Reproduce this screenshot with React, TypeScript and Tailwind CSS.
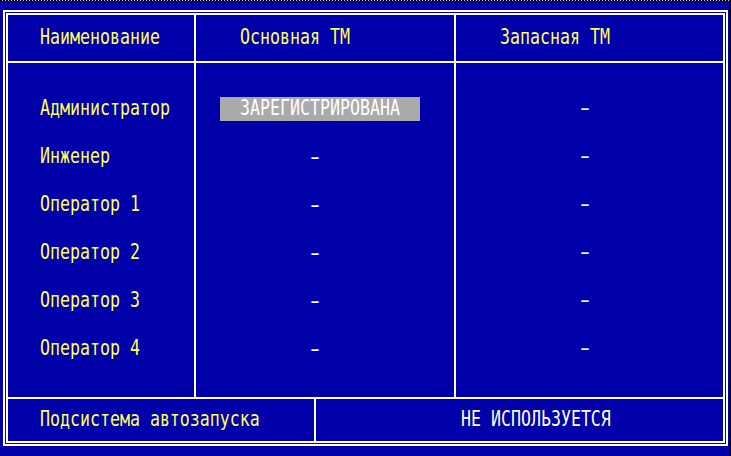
const rows = ['Администратор', 'Инженер', 'Оператор 1', 'Оператор 2', 'Оператор 3', 'Оператор 4'];

function T({ children, className = '' }: { children: React.ReactNode; className?: string }) {
  return (
    <span className={`inline-block whitespace-pre font-['DejaVu_Sans_Mono',monospace] text-[16.6px] leading-none scale-y-[1.3] ${className}`}>
      {children}
    </span>
  );
}

function Dash() {
  return <T className="text-white scale-x-[1.7]">-</T>;
}

export default function App() {
  return (
    <div className="relative w-[731px] h-[456px] overflow-hidden bg-[#0000aa]">
      {/* screen edge artefacts */}
      <div className="absolute left-0 top-0 h-px w-full bg-[repeating-linear-gradient(90deg,#000_0px,#000_2px,#ccc_2px,#ccc_3px)]" />
      <div className="absolute right-0 top-0 h-full w-[2px] bg-black" />

      <div className="ml-[3px] mt-[10px] h-[436px] w-[725px] border-2 border-white p-px">
        <div className="flex h-full flex-col border-2 border-white">
          {/* header */}
          <div className="flex h-[48px] border-b-2 border-white">
            <div className="flex w-[188px] items-center border-r-2 border-white pl-[32px]">
              <T className="text-[#ffff55]">Наименование</T>
            </div>
            <div className="flex w-[260px] items-center border-r-2 border-white pl-[44px]">
              <T className="text-[#ffff55]">Основная ТМ</T>
            </div>
            <div className="flex flex-1 items-center pl-[44px]">
              <T className="text-[#ffff55]">Запасная ТМ</T>
            </div>
          </div>

          {/* body */}
          <div className="flex h-[336px] border-b-2 border-white">
            <div className="w-[188px] border-r-2 border-white pt-[22px] pl-[32px]">
              {rows.map((r) => (
                <div key={r} className="flex h-12 items-center">
                  <T className="text-[#ffff55]">{r}</T>
                </div>
              ))}
            </div>
            <div className="w-[260px] border-r-2 border-white pt-[22px]">
              {rows.map((r, i) => (
                <div key={r} className="flex h-12 items-center">
                  {i === 0 ? (
                    <div className="ml-[24px] flex h-[24px] w-[200px] items-center justify-center bg-[#aaaaaa]">
                      <T className="text-white">ЗАРЕГИСТРИРОВАНА</T>
                    </div>
                  ) : (
                    <div className="pl-[114px]">
                      <Dash />
                    </div>
                  )}
                </div>
              ))}
            </div>
            <div className="flex-1 pt-[22px] pl-[124px]">
              {rows.map((r) => (
                <div key={r} className="flex h-12 items-center">
                  <Dash />
                </div>
              ))}
            </div>
          </div>

          {/* footer */}
          <div className="flex flex-1">
            <div className="flex w-[308px] items-center border-r-2 border-white pl-[32px]">
              <T className="text-[#ffff55]">Подсистема автозапуска</T>
            </div>
            <div className="flex flex-1 items-center pl-[145px]">
              <T className="text-white">НЕ ИСПОЛЬЗУЕТСЯ</T>
            </div>
          </div>
        </div>
      </div>
    </div>
  );
}
